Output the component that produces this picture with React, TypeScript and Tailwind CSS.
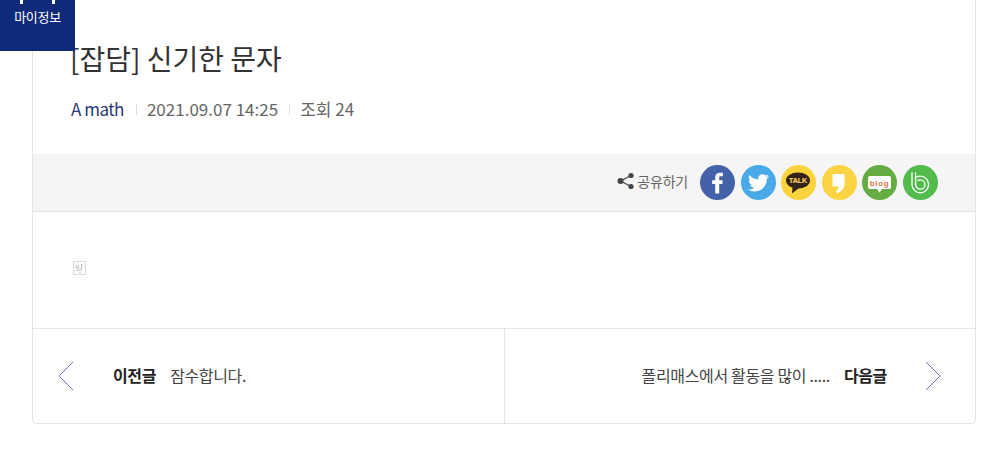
const font = { fontFamily: '"Noto Sans CJK KR", "Noto Sans", sans-serif' };

function Circle({ color, children }: { color: string; children: React.ReactNode }) {
  return (
    <svg width="35" height="35" viewBox="0 0 35 35" className="block">
      <circle cx="17.5" cy="17.5" r="17.5" fill={color} />
      {children}
    </svg>
  );
}

function ShareIcons() {
  return (
    <div className="flex items-center gap-[5.6px]">
      {/* facebook */}
      <Circle color="#4362a8">
        <path d="M15.200 28.500V19h-3v-3.800h3v-2.700c0-3 1.800-4.800 4.700-4.800h3v3.600h-1.900c-1.300 0-1.800.6-1.800 1.800v2.100h3.600l-.5 3.800h-3.100v9.500z" fill="#fff" />
      </Circle>
      {/* twitter */}
      <Circle color="#4aa9e8">
        <path d="M28 11.200c-.8.4-1.600.6-2.500.7.900-.5 1.600-1.400 1.900-2.400-.8.5-1.800.9-2.800 1.100-.8-.9-1.900-1.400-3.100-1.400-2.400 0-4.300 1.900-4.300 4.300 0 .3 0 .7.100 1-3.600-.2-6.700-1.900-8.900-4.500-.4.6-.6 1.400-.6 2.200 0 1.500.8 2.800 1.900 3.600-.7 0-1.400-.2-1.900-.5v.1c0 2.100 1.500 3.800 3.400 4.200-.4.100-.7.200-1.100.2-.3 0-.5 0-.8-.1.500 1.700 2.100 3 4 3-1.500 1.200-3.300 1.900-5.300 1.900-.3 0-.7 0-1-.1 1.900 1.200 4.200 1.900 6.600 1.900 7.900 0 12.200-6.500 12.200-12.200v-.6c.8-.6 1.500-1.300 2.100-2.200z" fill="#fff" />
      </Circle>
      {/* kakaotalk */}
      <Circle color="#fbd33d">
        <ellipse cx="17" cy="15.500" rx="12" ry="8" fill="#33241a" />
        <path d="M11.500 21 L11 28.500 L18 23z" fill="#33241a" />
        <text x="17" y="18" textAnchor="middle" fontSize="7" fontWeight="700" fill="#f6d060" stroke="#f6d060" strokeWidth="0.200" style={{ fontFamily: '"Liberation Sans", sans-serif' }}>TALK</text>
      </Circle>
      {/* kakaostory */}
      <Circle color="#fcd443">
        <path d="M10.500 9h12v10.500c0 3.500-2.500 6.500-7 9l-1.500-2.500c1.500-1 2.500-2.500 3-4.500h-6.500z" fill="#fff" />
      </Circle>
      {/* naver blog */}
      <Circle color="#65ad43">
        <path d="M8 11h19a2 2 0 0 1 2 2v9a2 2 0 0 1-2 2h-7l-2.500 3.500L15 24H8a2 2 0 0 1-2-2v-9a2 2 0 0 1 2-2z" fill="#fff" />
        <text x="17.500" y="20.500" textAnchor="middle" fontSize="8" fontWeight="700" letterSpacing="0.600" fill="#d9743f" style={{ fontFamily: '"Liberation Sans", sans-serif' }}>blog</text>
      </Circle>
      {/* band */}
      <Circle color="#53bb4c">
        <g fill="none" stroke="#fff" strokeWidth="1.300" strokeLinecap="round">
          <path d="M9 8v11.500a8.300 8.300 0 1 0 8.300-8.300c-1.500 0-2.800.4-3.900 1.100" />
          <path d="M12.600 8v11.500a4.700 4.700 0 1 0 4.700-4.700c-.9 0-1.700.2-2.400.7" />
        </g>
      </Circle>
    </div>
  );
}

export default function App() {
  return (
    <div className="relative h-[451px] w-[1000px] overflow-hidden bg-white" style={font}>
      {/* 마이정보 버튼 */}
      <div className="absolute left-0 top-0 z-10 h-[51px] w-[75px] bg-[#0f2a78] text-center text-[13px] leading-[19px] tracking-[-0.3px] text-white">
        <svg width="75" height="5" viewBox="0 0 75 5" className="block">
          <rect x="20" y="0" width="3" height="4" fill="#fff" />
          <rect x="52" y="0" width="3" height="4" fill="#fff" />
        </svg>
        <div className="pt-[2px]">마이정보</div>
      </div>

      <div className="ml-8 h-[424px] w-[944px] rounded-b-[5px] border border-t-0 border-[#e3e3e3]">
        {/* 제목 */}
        <div className="h-[154px] pl-[38px]">
          <h1 className="-ml-px pt-[36px] text-[28px] font-normal leading-[44px] text-[#333]">[잡담] 신기한 문자</h1>
          <div className="mt-[17px] flex items-center text-[17px] leading-[24px] text-[#666]">
            <span className="tracking-[-0.5px] text-[#2b3a75]">A math</span>
            <span className="ml-[12px] mr-[10px] h-[11px] w-px bg-[#ddd]" />
            <span>2021.09.07 14:25</span>
            <span className="ml-[11px] mr-[10px] h-[11px] w-px bg-[#ddd]" />
            <span>조회 24</span>
          </div>
        </div>

        {/* 공유하기 */}
        <div className="flex h-[58px] items-center justify-end border-b border-[#e3e3e3] bg-[#f5f5f5] pr-[37px]">
          <svg width="18" height="18" viewBox="0 0 18 18" className="mb-[3px] mr-[2px]">
            <g fill="#444">
              <circle cx="3.500" cy="9" r="3" />
              <circle cx="14" cy="3.500" r="2.600" />
              <circle cx="14" cy="14.500" r="2.600" />
            </g>
            <path d="M14 3.500 3.500 9 14 14.500" fill="none" stroke="#444" strokeWidth="1.300" />
          </svg>
          <span className="mb-[3px] mr-[12px] text-[14px] tracking-[-0.2px] text-[#666]">공유하기</span>
          <ShareIcons />
        </div>

        {/* 본문 - 깨진 이미지 */}
        <div className="h-[116px] pl-[40px] pt-[49px]">
          <svg width="13" height="14" viewBox="0 0 13 14" className="block">
            <rect x="0.500" y="0.500" width="12" height="13" fill="#fdfdfd" stroke="#bbb" strokeDasharray="1 1" />
            <path d="M3 4v3h2.500V4M8.500 3v6M3.500 9.500l5-1M7 10.500v2" fill="none" stroke="#aaa" strokeWidth="0.800" />
          </svg>
        </div>

        {/* 이전글 / 다음글 */}
        <div className="flex h-[95px] border-t border-[#e6e6e6] text-[16px] tracking-[-0.35px] text-[#444]">
          <div className="flex w-[472px] items-center border-r border-[#e6e6e6] pb-[2px] pl-[25px]">
            <svg width="16" height="30" viewBox="0 0 16 30" className="mr-[39px] mt-[2px]">
              <path d="M15 1 1 15l14 14" fill="none" stroke="#7274b4" strokeWidth="1" />
            </svg>
            <b className="mr-[14px] font-bold text-[#222]">이전글</b>
            <span>잠수합니다.</span>
          </div>
          <div className="flex flex-1 items-center justify-end pb-[2px] pr-[34px]">
            <span>폴리매스에서 활동을 많이 .....</span>
            <b className="ml-[14px] font-bold text-[#222]">다음글</b>
            <svg width="16" height="30" viewBox="0 0 16 30" className="ml-[38px] mt-[2px]">
              <path d="M1 1l14 14L1 29" fill="none" stroke="#7274b4" strokeWidth="1" />
            </svg>
          </div>
        </div>
      </div>
    </div>
  );
}
